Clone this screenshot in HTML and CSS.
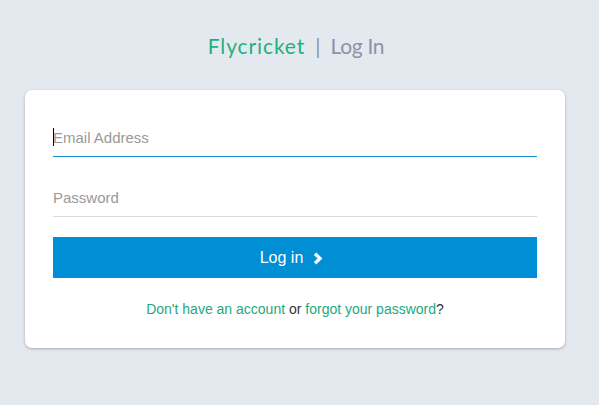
FILE: index.html
```html
<!DOCTYPE html>
<html>
<head>
<meta charset="utf-8">
<link rel="stylesheet" href="styles.css">
</head>
<body>
<div class="page">
  <h1 class="title"><span class="brand">Flycricket</span><span class="sep">|</span><span class="sub">Log In</span></h1>
  <form class="card">
    <div class="field active"><span class="caret"></span><span class="ph">Email Address</span></div>
    <div class="field"><span class="ph">Password</span></div>
    <button type="button" class="btn">Log in <svg class="chev" width="12" height="13" viewBox="0 0 12 13"><path d="M3 1.8 L8 6.5 L3 11.2" fill="none" stroke="#fff" stroke-width="3.4" stroke-linejoin="miter"/></svg></button>
    <p class="links"><a>Don't have an account</a> or <a>forgot your password</a>?</p>
  </form>
</div>
</body>
</html>
```
FILE: styles.css
```css
html, body { margin: 0; padding: 0; }
body { background: #e4e9f0; font-family: "Liberation Sans", Arial, sans-serif; width: 599px; height: 405px; overflow: hidden; }
.page { padding: 0 34px 0 25px; }
.title { margin: 0; padding-top: 33px; height: 90px; box-sizing: border-box; text-align: center; font-family: "Lato", "Open Sans", sans-serif; font-weight: 400; font-size: 21px; line-height: 26px; padding-left: 2px; }
.brand { color: #1fb07c; letter-spacing: 0.9px; }
.sep { color: #8b93a8; margin: 0 10px; }
.sub { color: #8b93a8; letter-spacing: -0.3px; }
.card { background: #fff; border-radius: 7px; box-shadow: 0 1px 3px rgba(0,0,0,0.28); height: 258px; box-sizing: border-box; padding: 26px 28px 0 28px; display: flex; flex-direction: column; }
.field { height: 40px; border-bottom: 1px solid #dcdcdc; display: flex; align-items: center; font-size: 15px; color: #999; margin-bottom: 19px; position: relative; }
.field.active { border-bottom-color: #1a8fd0; }
.caret { position: absolute; left: 0; top: 12px; width: 1px; height: 18px; background: #000; }
.ph { padding-top: 2px; }
.btn { margin-top: 1px; height: 41px; border: 0; background: #008fd5; color: #fff; font-family: "Liberation Sans", Arial, sans-serif; font-size: 16px; display: flex; align-items: center; justify-content: center; gap: 9px; padding: 0 6px 0 0; }
.chev { margin-top: 1px; }
.links { margin: 23px 0 0; text-align: center; font-size: 14px; color: #333; }
.links a { color: #1fa882; }
```
